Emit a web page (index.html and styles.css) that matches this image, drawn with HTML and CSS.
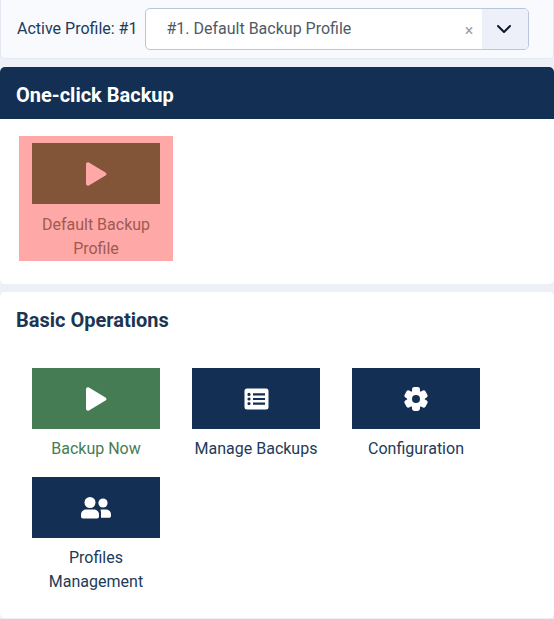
FILE: index.html
```html
<!DOCTYPE html>
<html lang="en">
<head>
<meta charset="utf-8">
<title>Backup Control Panel</title>
<link rel="stylesheet" href="styles.css">
</head>
<body>
<div class="profile-bar">
  <label class="profile-label">Active Profile: #1</label>
  <div class="select">
    <span class="select-value">#1. Default Backup Profile</span>
    <span class="select-clear">×</span>
    <span class="select-toggle">
      <svg width="16" height="16" viewBox="0 0 16 16"><path d="M2 5l6 6 6-6" fill="none" stroke="#0b1a2b" stroke-width="2" stroke-linecap="round" stroke-linejoin="round"/></svg>
    </span>
  </div>
</div>

<section class="card card-oneclick">
  <h2 class="card-header">One-click Backup</h2>
  <div class="card-body oneclick-body">
    <a class="tile tile-active">
      <span class="tile-icon">
        <svg class="icon" width="24" height="26" viewBox="0 0 24 26"><path d="M2 3.2C2 1.7 3.6.8 4.900 1.600L21.500 11.400C22.800 12.200 22.800 13.900 21.500 14.600L4.900 24.400C3.600 25.200 2 24.300 2 22.800Z" fill="currentColor"/></svg>
      </span>
      <span class="tile-label">Default Backup Profile</span>
    </a>
  </div>
</section>

<section class="card card-basic">
  <h2 class="card-title">Basic Operations</h2>
  <div class="tiles">
    <a class="tile tile-green">
      <span class="tile-icon">
        <svg class="icon" width="24" height="26" viewBox="0 0 24 26"><path d="M2 3.2C2 1.7 3.6.8 4.900 1.600L21.500 11.400C22.800 12.200 22.800 13.900 21.500 14.600L4.900 24.400C3.600 25.200 2 24.300 2 22.800Z" fill="currentColor"/></svg>
      </span>
      <span class="tile-label">Backup Now</span>
    </a>
    <a class="tile">
      <span class="tile-icon">
        <svg class="icon" width="25" height="22" viewBox="0 0 25 22"><path fill-rule="evenodd" d="M3 0.500H22A2.500 2.500 0 0 1 24.500 3V19A2.500 2.500 0 0 1 22 21.500H3A2.500 2.500 0 0 1 .5 19V3A2.500 2.500 0 0 1 3 .5ZM5 4.800a1.600 1.600 0 1 0 0 3.200 1.600 1.600 0 0 0 0-3.200ZM5 9.400a1.600 1.600 0 1 0 0 3.200 1.600 1.600 0 0 0 0-3.200ZM5 14a1.600 1.600 0 1 0 0 3.200 1.600 1.600 0 0 0 0-3.200ZM9 5.300V7.500H21V5.300ZM9 9.900V12.100H21V9.900ZM9 14.500V16.700H21V14.500Z" fill="currentColor"/></svg>
      </span>
      <span class="tile-label">Manage Backups</span>
    </a>
    <a class="tile">
      <span class="tile-icon">
        <svg class="icon" width="24" height="24" viewBox="0 0 24 24">
          <g fill="currentColor">
            <circle cx="12" cy="12" r="8.700"/>
            <rect x="8" y="0" width="8" height="24" rx="2.400"/>
            <rect x="8" y="0" width="8" height="24" rx="2.400" transform="rotate(60 12 12)"/>
            <rect x="8" y="0" width="8" height="24" rx="2.400" transform="rotate(120 12 12)"/>
          </g>
          <circle class="gear-hole" cx="12" cy="12" r="4"/>
        </svg>
      </span>
      <span class="tile-label">Configuration</span>
    </a>
    <a class="tile">
      <span class="tile-icon">
        <svg class="icon" width="32" height="22" viewBox="0 0 32 22"><circle cx="10" cy="5.500" r="5.500" fill="currentColor"/><circle cx="23" cy="6" r="4.600" fill="currentColor"/><path d="M1 17.500C1 14.500 3.500 12.500 6.500 12.500H13.500C16.500 12.500 19 14.500 19 17.500V19.500C19 20.700 18.200 21.500 17 21.500H3C1.800 21.500 1 20.700 1 19.500Z" fill="currentColor"/><path d="M20.500 12.600H25.500C28.500 12.600 31 14.500 31 17.500V19C31 20.200 30.200 20.800 29 20.800H21V16.500C21 15 20.800 13.700 20.500 12.600Z" fill="currentColor"/></svg>
      </span>
      <span class="tile-label">Profiles Management</span>
    </a>
  </div>
</section>
</body>
</html>
```

FILE: styles.css
```css
* { box-sizing: border-box; }

html, body { height: 100%; }

body {
  margin: 0;
  background: #edf1f7;
  font-family: Roboto, "Liberation Sans", sans-serif;
  font-size: 16px;
  line-height: 24px;
  color: #132f54;
  overflow: hidden;
}

.profile-bar {
  display: flex;
  align-items: center;
  gap: 8px;
  height: 59px;
  padding: 0 24px 0 16px;
  background: #f8fafd;
  border: 1px solid #e4e9f1;
  border-top: 0;
  border-radius: 0 0 5px 5px;
}

.profile-label { color: #223a58; white-space: nowrap; }

.select {
  flex: 1;
  display: flex;
  align-items: center;
  height: 42px;
  background: #fff;
  border: 1px solid #b9c6da;
  border-radius: 5px;
  overflow: hidden;
}

.select-value {
  flex: 1;
  padding-left: 20px;
  color: #4f5a66;
}

.select-clear {
  width: 14px;
  margin-right: 6px;
  margin-top: 3px;
  color: #9aa0a6;
  text-align: center;
}

.select-toggle {
  display: flex;
  align-items: center;
  justify-content: center;
  width: 46px;
  height: 100%;
  padding-right: 2px;
  background: #edf0f8;
}

.card {
  background: #fff;
  border-radius: 5px;
}

.card-oneclick {
  margin-top: 8px;
  height: 217px;
}

.card-header {
  margin: 0;
  height: 52px;
  padding: 4px 16px 0;
  display: flex;
  align-items: center;
  background: #132f54;
  color: #fff;
  font-size: 20px;
  font-weight: 700;
  border-radius: 5px 5px 0 0;
}

.oneclick-body {
  padding: 17px 0 0 19px;
}

.card-basic {
  margin-top: 8px;
  height: 326px;
  padding: 16px;
}

.card-title {
  margin: 0;
  font-size: 20px;
  font-weight: 700;
  color: #1b3553;
}

.tiles {
  display: flex;
  flex-wrap: wrap;
  margin-top: 36px;
}

.tile {
  display: flex;
  flex-direction: column;
  align-items: center;
  width: 160px;
  padding: 0 16px;
  text-align: center;
  color: #223a58;
  margin-bottom: 16px;
}

.tile-icon {
  display: flex;
  align-items: center;
  justify-content: center;
  width: 128px;
  height: 61px;
  margin-bottom: 8px;
  background: #132f54;
  color: #fff;
}

.gear-hole { fill: #132f54; }

.tile-green { color: #467c53; }
.tile-green .tile-icon { background: #467c53; }

.tile-active {
  width: 154px;
  height: 125px;
  padding: 7px 13px 0;
  margin: 0;
  background: #ffa8a8;
  color: #a05a50;
}
.tile-active .tile-icon {
  background: #825438;
  color: #ffa8a8;
  margin-bottom: 9px;
}
```
